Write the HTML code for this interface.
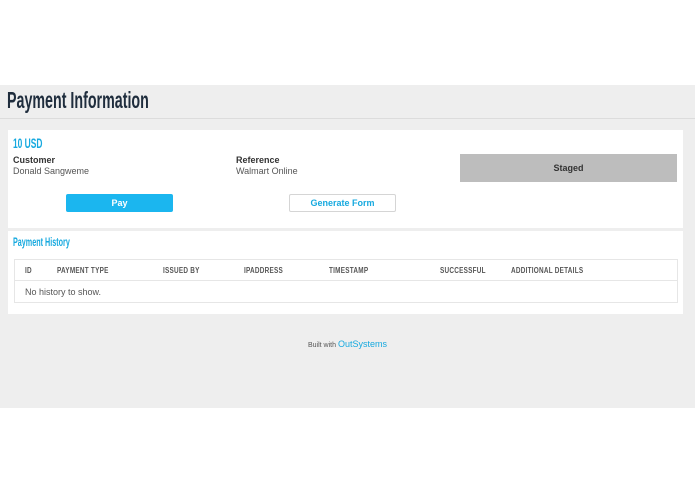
<!DOCTYPE html><html><head><style>
body{margin:0;width:695px;height:494px;background:#fff;font-family:"Liberation Sans",sans-serif;position:relative;overflow:hidden}
.a{position:absolute}
.c{display:inline-block;transform-origin:0 50%;white-space:nowrap}
.th{position:absolute;top:266px;font-size:8px;font-weight:bold;color:#555;transform:scaleX(.8);transform-origin:0 0;letter-spacing:.3px}
</style></head><body>
<div class="a" style="left:0;top:85px;width:695px;height:323px;background:#eeeeee"></div>
<div class="a" style="left:0;top:118px;width:695px;height:1px;background:#dcdcdc"></div>
<div class="a c" style="left:7px;top:87px;font-size:23px;font-weight:bold;color:#1f2d3d;transform:scaleX(.62)">Payment Information</div>
<div class="a" style="left:8px;top:130px;width:675px;height:98px;background:#fff"></div>
<div class="a" style="left:8px;top:231px;width:675px;height:83px;background:#fff"></div>
<div class="a c" style="left:13px;top:135px;font-size:14px;font-weight:bold;color:#16a9df;transform:scaleX(.6)">10 USD</div>
<div class="a" style="left:13px;top:155px;font-size:9px;font-weight:bold;color:#333">Customer</div>
<div class="a" style="left:13px;top:166px;font-size:9px;color:#555">Donald Sangweme</div>
<div class="a" style="left:236px;top:155px;font-size:9px;font-weight:bold;color:#333">Reference</div>
<div class="a" style="left:236px;top:166px;font-size:9px;color:#555">Walmart Online</div>
<div class="a" style="left:460px;top:154px;width:217px;height:28px;background:#bdbdbd;font-size:9px;font-weight:bold;color:#333;text-align:center;line-height:28px">Staged</div>
<div class="a" style="left:66px;top:194px;width:107px;height:18px;background:#1bb6ef;border-radius:2px;color:#fff;font-size:9px;font-weight:bold;text-align:center;line-height:18px">Pay</div>
<div class="a" style="left:289px;top:194px;width:105px;height:16px;background:#fff;border:1px solid #d5d5d5;border-radius:2px;color:#16a9df;font-size:9px;font-weight:bold;text-align:center;line-height:17px">Generate Form</div>
<div class="a c" style="left:13px;top:235px;font-size:12px;font-weight:bold;color:#16a9df;transform:scaleX(.6)">Payment History</div>
<div class="a" style="left:14px;top:259px;width:662px;height:42px;background:#fff;border:1px solid #e6e6e6"></div>
<div class="a" style="left:15px;top:280px;width:662px;height:1px;background:#e6e6e6"></div>
<div class="th" style="left:25px">ID</div>
<div class="th" style="left:57px">PAYMENT TYPE</div>
<div class="th" style="left:163px">ISSUED BY</div>
<div class="th" style="left:244px">IPADDRESS</div>
<div class="th" style="left:329px">TIMESTAMP</div>
<div class="th" style="left:440px">SUCCESSFUL</div>
<div class="th" style="left:511px">ADDITIONAL DETAILS</div>
<div class="a" style="left:25px;top:287px;font-size:9px;color:#555">No history to show.</div>
<div class="a" style="left:0;width:695px;top:339px;text-align:center;font-size:7px;color:#555">Built with <span style="color:#16a9df;font-size:9px">OutSystems</span></div>
</body></html>
